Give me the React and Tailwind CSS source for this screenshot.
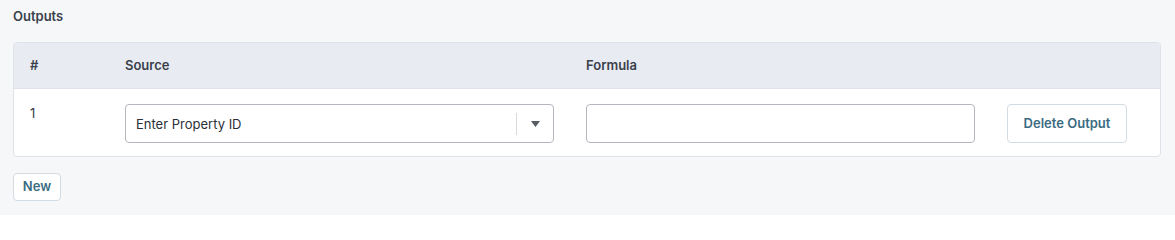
export default function App() {
  return (
    <div className="w-[1175px] h-[215px] bg-[#f6f7f9] text-[#353b45] overflow-hidden" style={{ fontFamily: 'Inter, "Noto Sans", sans-serif' }}>
      <div className="pl-[13px] pr-[14px] pt-[7px]">
        <div className="text-[13px] font-semibold leading-[18px] text-[#3a414b]">Outputs</div>
        <div className="mt-[17px] border border-[#dfe3e9] rounded-[4px] overflow-hidden bg-white">
          <div className="flex items-center h-[46px] bg-[#e8ecf2] border-b border-[#dfe3e9] text-[13px] font-semibold text-[#3a414b]">
            <div className="w-[111px] pl-[16px]">#</div>
            <div className="w-[461px]">Source</div>
            <div>Formula</div>
          </div>
          <div className="flex h-[67px]">
            <div className="w-[111px] pl-[16px] pt-[15px] text-[13px] leading-[18px] text-[#353b45]">1</div>
            <div className="pt-[15px]">
              <div className="w-[429px] h-[39px] border border-[#b3b7bd] rounded-[4px] bg-white flex items-center">
                <div className="flex-1 pl-[10px] text-[13px] leading-[18px] text-[#2a3038]">Enter Property ID</div>
                <div className="w-px h-[22px] bg-[#d6d9dd]"></div>
                <div className="w-[36px] flex items-center justify-center">
                  <svg width="9" height="6" viewBox="0 0 9 6"><path d="M0 0 H9 L4.5 6 Z" fill="#555b63" /></svg>
                </div>
              </div>
            </div>
            <div className="pt-[15px] pl-[32px]">
              <div className="w-[389px] h-[39px] border border-[#b3b7bd] rounded-[4px] bg-white"></div>
            </div>
            <div className="pt-[15px] pl-[32px]">
              <button className="h-[39px] w-[120px] border border-[#d3dbe3] rounded-[4px] bg-white text-[13px] font-semibold text-[#3b6b81]">Delete Output</button>
            </div>
          </div>
        </div>
        <button className="mt-[16px] h-[28px] w-[48px] border border-[#d3dbe3] rounded-[4px] bg-white text-[13px] font-semibold text-[#3b6b81]">New</button>
      </div>
    </div>
  );
}
